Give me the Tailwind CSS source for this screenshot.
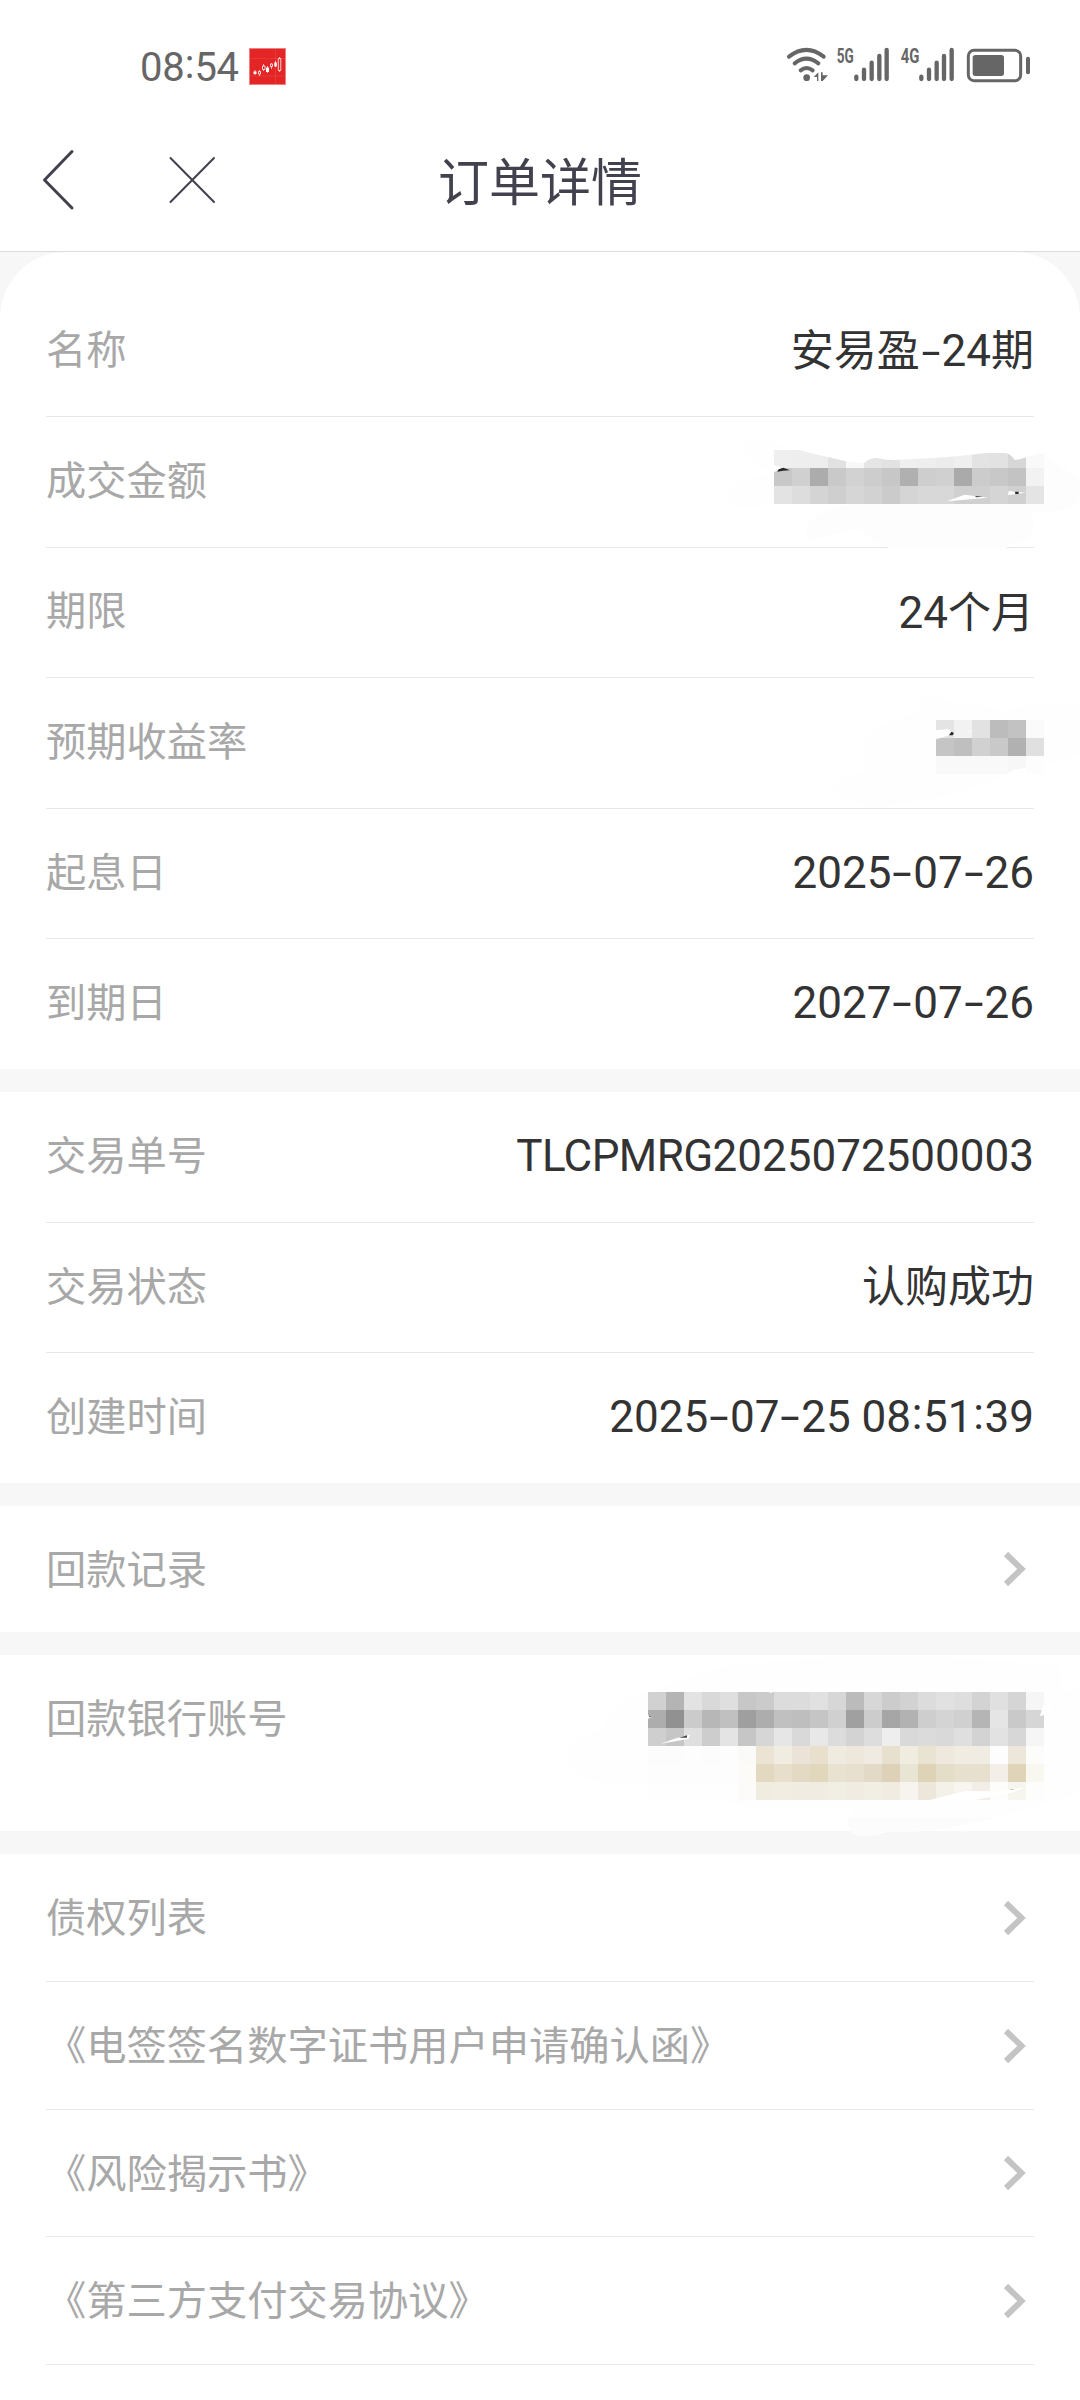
<!DOCTYPE html>
<html lang="zh-CN">
<head>
<meta charset="utf-8">
<title>订单详情</title>
<script src="https://cdn.jsdelivr.net/npm/@tailwindcss/browser@4"></script>
</head>
<body class="w-[1080px] h-[2400px] overflow-hidden bg-white font-['Roboto','Noto_Sans_CJK_SC',sans-serif] text-[#333]">

<!-- status bar -->
<div class="h-[110px] flex items-start justify-between pl-[140px]">
  <div class="flex items-center pt-[47px]">
    <span class="text-[40px] leading-[37px] pt-[2px] text-[#666] w-[109px] whitespace-nowrap tracking-[-0.300px]">08<span class="inline-block w-[10px] text-center -translate-y-[3px]">:</span>54</span>
    <svg class="w-[37px] h-[37px]" viewBox="0 0 37 37">
      <rect width="37" height="37" fill="#f08080"/><rect x="1" y="1" width="35" height="35" fill="#e32526"/>
      <path d="M1 10.500H36M1 28H36M26.500 1V36" stroke="#e94040" stroke-width=".7"/>
      <path d="M6 22v5M10.500 22v6M14.500 16v7M18.500 18v7M22.500 15v6M26.500 13v6M30.500 9v15" stroke="#ffd8d8" stroke-width=".8"/>
      <path d="M4.500 23.500h3v2.500h-3zM17 19.500h3v4.500h-3zM25.300 14.500h2.500v4h-2.500z" fill="#fff"/>
      <path d="M9.500 23.500h2v2.500h-2zM13.500 18h2.500v3.500h-2.500zM21.500 16h2v2.500h-2zM29.300 10.500h2.500v12h-2.500z" fill="#e32526" stroke="#fff" stroke-width=".8"/>
    </svg>
  </div>
  <svg class="w-[320px] h-[80px] mt-[30px]" viewBox="0 0 960 240" fill="none" stroke="#666" stroke-linecap="round">
    <path d="M87 80Q139 39 191 80" stroke-width="12"/>
    <path d="M104 100Q139 72 175 100" stroke-width="12"/>
    <path d="M122 121Q139 107 158 121" stroke-width="12"/>
    <circle cx="140" cy="143" r="10" fill="#666" stroke="none"/>
    <path d="M161 141L175 127V153H171V141ZM183 127H188V136H204L188 153H183Z" fill="#666" stroke="none"/>
    <g fill="#666" stroke="none" font-family="Roboto" font-weight="700" font-size="60">
      <text x="230" y="98" textLength="51" lengthAdjust="spacingAndGlyphs">5G</text>
      <text x="422" y="98" textLength="56" lengthAdjust="spacingAndGlyphs">4G</text>
    </g>
    <path d="M289 140V147M312 119V147M335 98V147M358 78V147M380 60V147M484 140V147M507 119V147M530 98V147M552 78V147M575 60V147" stroke-width="13"/>
    <rect x="625" y="61" width="157" height="91" rx="17" stroke-width="9"/>
    <rect x="638" y="75" width="94" height="63" rx="8" fill="#666" stroke="none"/>
    <path d="M804 86V127" stroke-width="12"/>
  </svg>
</div>

<!-- title bar -->
<div class="h-[142px] border-b border-[#dcdcdc] grid grid-cols-[400px_1fr_400px]">
  <div class="flex items-start pl-[40px] pt-[36px]">
    <svg class="w-[40px] h-[66px]" viewBox="0 0 40 66" fill="none" stroke="#42424f" stroke-width="3" stroke-linecap="round" stroke-linejoin="round"><path d="M32 5.500L4.500 34L32 62"/></svg>
    <svg class="w-[50px] h-[66px] ml-[87px]" viewBox="0 0 50 66" fill="none" stroke="#42424f" stroke-width="2" stroke-linecap="round"><path d="M3.500 12L47 56M47 12L3.500 56"/></svg>
  </div>
  <div class="text-[51px] leading-[76px] text-[#42424f] text-center pt-[36px] whitespace-nowrap">订单详情</div>
</div>

<main class="bg-[#f7f7f7] flex flex-col gap-[23px]">
  <section class="relative bg-white rounded-t-[66px] pt-[34px] px-[46px] text-[43px] whitespace-nowrap">
    <div class="h-[131px] border-b border-[#e8e8e8] flex items-center justify-between"><span class="text-[40.250px] pt-px text-[#a8a8a8]">名称</span><span>安易盈<span class="inline-block w-[21.800px] text-center scale-x-160">-</span><span class="text-[44px]">24</span>期</span></div>
    <div class="h-[131px] border-b border-[#e8e8e8] flex items-center"><span class="text-[40.250px] pt-px text-[#a8a8a8]">成交金额</span></div>
    <div class="h-[130px] border-b border-[#e8e8e8] flex items-center justify-between"><span class="text-[40.250px] text-[#a8a8a8]">期限</span><span><span class="text-[44px]">24</span>个月</span></div>
    <div class="h-[131px] border-b border-[#e8e8e8] flex items-center"><span class="text-[40.250px] pt-px text-[#a8a8a8]">预期收益率</span></div>
    <div class="h-[130px] border-b border-[#e8e8e8] flex items-center justify-between"><span class="text-[40.250px] pt-px text-[#a8a8a8]">起息日</span><span class="text-[44px] pb-[2px]">2025<span class="inline-block w-[21.800px] text-center scale-x-160">-</span>07<span class="inline-block w-[21.800px] text-center scale-x-160">-</span>26</span></div>
    <div class="h-[130px] flex items-center justify-between"><span class="text-[40.250px] pt-px text-[#a8a8a8]">到期日</span><span class="text-[44px] pb-[2px]">2027<span class="inline-block w-[21.800px] text-center scale-x-160">-</span>07<span class="inline-block w-[21.800px] text-center scale-x-160">-</span>26</span></div>

    <!-- masked amount -->
    <svg class="absolute left-[720px] top-[178px] w-[360px] h-[120px]" viewBox="0 0 1080 360">
      <path d="M75 30C110 10 150 35 200 48L162 60V108L200 130L162 220C90 245 20 240 20 195C22 150 100 135 160 133L75 80Z" fill="#fefefe"/>
      <path d="M380 225C300 245 250 270 258 320C275 345 340 305 420 295C450 330 480 357 580 357H800C900 350 950 320 940 285L935 250C1010 245 1080 235 1080 200V150L972 70V222Z" fill="#fdfdfd"/>
      <g data-mosaic="efefef eeeeee eeeeee e2e2e2 f8f8f8 e5e5e5 e2e2e2 efefef eeeeee ececec efefef e3e3e3 e2e2e2 d7d7d7 f9f9f9|c8c8c8 d0d0d0 acacac c9c9c9 d2d2d2 cdcdcd c7c7c7 b0b0b0 cecece d0d0d0 aaaaaa cccccc c8c8c8 c3c3c3 f2f2f2|e3e3e3 dddddd d4d4d4 cfcfcf d6d6d6 d2d2d2 cbcbcb d5d5d5 d8d8d8 d8d8d8 d0d0d0 d0d0d0 d5d5d5 d0d0d0 e4e4e4" data-x="162" data-y="60"></g>
      <path d="M240 60Q270 70 325 81Q380 97 432 100Q450 82 470 84Q500 92 540 89L640 84Q720 79 800 69H855Q872 70 884 90Q910 87 925 79L972 69V50H240Z" fill="#fff"/>
      <path d="M162 106L186 113L162 127ZM680 214L734 194L805 203ZM866 183L918 188L864 195Z" fill="#fff"/>
      <path d="M505 350H860V360H505Z" fill="#fefefe"/>
      <path d="M172 125L176 118L190 113L210 121L190 122ZM764 198L788 200L770 202ZM885 185H896V192H886Z" fill="#292929"/>
    </svg>

    <!-- masked rate -->
    <svg class="absolute left-[820px] top-[438px] w-[260px] h-[120px]" viewBox="0 0 780 360">
      <path d="M295 20C340 0 380 40 440 42L560 60L700 35L780 50V190C700 225 640 230 570 255C430 310 280 340 180 350C110 350 30 320 35 290C45 255 100 260 145 240C110 180 110 110 300 65Z" fill="#fefefe"/>
      <g data-mosaic="e4e4e4 f2f2f2 e2e2e2 bcbcbc c2c2c2 fafafa|c5c5c5 bfbfbf d1d1d1 c9c9c9 b1b1b1 e0e0e0|f9f9f9 f9f9f9 f9f9f9 f9f9f9 f7f7f7 fdfdfd" data-x="348" data-y="90"></g>
      <path d="M348 121L384 117L396 125L390 135L348 148ZM560 252L580 240L618 233V252ZM444 123L453 121L450 126Z" fill="#fff"/>
      <path d="M387 136L394 125L402 129L398 136Z" fill="#2b2b2b"/>
    </svg>
  </section>

  <section class="bg-white px-[46px] text-[43px] whitespace-nowrap">
    <div class="h-[131px] border-b border-[#e8e8e8] flex items-center justify-between"><span class="text-[40.250px] pt-px text-[#a8a8a8]">交易单号</span><span class="text-[44px] pb-[2px]"><span class="tracking-[-0.600px]">TLCPMRG</span>2025072500003</span></div>
    <div class="h-[130px] border-b border-[#e8e8e8] flex items-center justify-between"><span class="text-[40.250px] pt-px text-[#a8a8a8]">交易状态</span><span>认购成功</span></div>
    <div class="h-[130px] flex items-center justify-between"><span class="text-[40.250px] pt-px text-[#a8a8a8]">创建时间</span><span class="text-[44px] pb-[2px]">2025<span class="inline-block w-[21.800px] text-center scale-x-160">-</span>07<span class="inline-block w-[21.800px] text-center scale-x-160">-</span>25 08<span class="inline-block w-[12px] text-center -translate-y-[3px]">:</span>51<span class="inline-block w-[12px] text-center -translate-y-[3px]">:</span>39</span></div>
  </section>

  <section class="bg-white h-[126px] pl-[46px] pr-[53px] flex items-center justify-between text-[40.250px] text-[#a8a8a8]">
    <span class="pt-[5px]">回款记录</span>
    <svg class="w-[24px] h-[36px]" viewBox="0 0 24 36" fill="none" stroke="#c4c4c4" stroke-width="6"><path d="M3 3L18.500 18L3 33"/></svg>
  </section>

  <section class="relative bg-white h-[176px] px-[46px] text-[40.250px] text-[#a8a8a8]">
    <div class="h-[128px] flex items-center"><span class="pt-[2px]">回款银行账号</span></div>
    <!-- masked bank account -->
    <svg class="absolute left-[560px] top-[-15px] w-[520px] h-[220px]" viewBox="0 0 1560 660">
      <path d="M264 155C390 120 400 85 620 65C800 48 1100 50 1300 60L1500 75L1505 155L1560 150V460C1400 510 1300 540 1110 570C1050 580 960 570 955 585H890C860 570 850 535 890 505C700 495 650 505 560 500C480 490 440 450 370 430C200 440 30 430 20 370C20 310 50 285 135 265C130 220 160 180 264 155Z" fill="#fefefe"/>
      <path d="M868 534H1300Q1200 560 1110 571L958 574L955 587H890C870 578 862 560 868 534Z" fill="#fcfcfc"/>
      <g data-mosaic="d1d1d1 b4b4b4 e3e3e3 d9d9d9 dfdfdf c7c7c7 cbcbcb dcdcdc dcdcdc e1e1e1 d7d7d7 bbbbbb d7d7d7 cccccc d2d2d2 dcdcdc e1e1e1 dedede d3d3d3 e0e0e0 d5d5d5 f6f6f6|adadad 919191 cbcbcb b7b7b7 c0c0c0 9f9f9f adadad c0c0c0 bebebe c5c5c5 d0d0d0 a0a0a0 cccccc a6a6a6 b2b2b2 cecece d4d4d4 d0d0d0 b5b5b5 e5e5e5 c9c9c9 d6d6d6|cfcfcf c6c6c6 dfdfdf cdcdcd e4e4e4 c6c6c6 d6d6d6 e6e6e6 d9d9d9 e8e8e8 dcdcdc d3d3d3 dddddd eeeeee d9d9d9 dbdbdb d9d9d9 dfdfdf d3d3d3 e2e2e2 d7d7d7 f6f6f6|fcfcfc fcfcfc fdfdfd fcfcfc fdfdfd fafaf8 ebe4d5 f0ece1 ebe3d7 e8dfcd efebe0 eee7db efebe2 e8e0cf f0ece0 e9e4d2 eee8df f0ece2 f0ece3 fdfdfd ede6da fcfcfa|fdfdfd fdfdfd fdfdfd fdfdfd fdfdfd fdfbf8 e3d9c1 e7dfcc e4d9c3 e1d7bc e9e2d0 e8e0cf e2dac6 ddd1b8 e9e5d5 ded3b7 e4ddc7 e8e0cf e8e0cf f4eee8 e0d4b8 f8f7f0|fefefe fefefe fefefe fefefe fefefe fdfbf9 f0ece0 f1ede1 f0ece1 f0ece1 f1eee4 f0ece1 f1eee4 f0ece1 f7f4ef ede6da f4f1e9 f8f5f1 f3ede8 fdfdfc f6f5ee fdfdfb" data-x="264" data-y="156"></g>
      <path d="M302 311L350 294L390 284L385 297ZM225 242L264 226L277 231L264 236ZM1110 480L1215 453L1300 454L1395 443L1350 460L1245 480ZM1440 229L1449 195L1480 200L1470 218ZM624 158L638 155L635 159Z" fill="#fff"/>
      <path d="M357 293L381 286V293ZM266 227L277 231L268 232Z" fill="#4a4a4a"/>
      <path d="M1348 450L1356 447L1364 450Z" fill="#b9b09c"/>
    </svg>
  </section>

  <section class="bg-white h-[546px] px-[46px] text-[40.250px] text-[#a8a8a8]">
    <div class="h-[128px] pr-[7px] border-b border-[#e8e8e8] flex items-center justify-between"><span class="pt-[4px]">债权列表</span><svg class="w-[24px] h-[36px]" viewBox="0 0 24 36" fill="none" stroke="#c4c4c4" stroke-width="6"><path d="M3 3L18.500 18L3 33"/></svg></div>
    <div class="h-[128px] pr-[7px] border-b border-[#e8e8e8] flex items-center justify-between"><span class="pt-[4px]">《电签签名数字证书用户申请确认函》</span><svg class="w-[24px] h-[36px]" viewBox="0 0 24 36" fill="none" stroke="#c4c4c4" stroke-width="6"><path d="M3 3L18.500 18L3 33"/></svg></div>
    <div class="h-[127px] pr-[7px] border-b border-[#e8e8e8] flex items-center justify-between"><span class="pt-[4px]">《风险揭示书》</span><svg class="w-[24px] h-[36px]" viewBox="0 0 24 36" fill="none" stroke="#c4c4c4" stroke-width="6"><path d="M3 3L18.500 18L3 33"/></svg></div>
    <div class="h-[128px] pr-[7px] border-b border-[#e8e8e8] flex items-center justify-between"><span class="pt-[4px]">《第三方支付交易协议》</span><svg class="w-[24px] h-[36px]" viewBox="0 0 24 36" fill="none" stroke="#c4c4c4" stroke-width="6"><path d="M3 3L18.500 18L3 33"/></svg></div>
  </section>
</main>

<script>
// mosaic cells, 54 units square
document.querySelectorAll('[data-mosaic]').forEach(g => {
  const x0 = +g.dataset.x, y0 = +g.dataset.y;
  g.dataset.mosaic.split('|').forEach((row, j) => row.split(' ').forEach((c, i) => {
    const r = document.createElementNS('http://www.w3.org/2000/svg', 'rect');
    r.setAttribute('x', x0 + i * 54); r.setAttribute('y', y0 + j * 54);
    r.setAttribute('width', 54); r.setAttribute('height', 54);
    r.setAttribute('fill', '#' + c);
    g.appendChild(r);
  }));
});
</script>
</body>
</html>
